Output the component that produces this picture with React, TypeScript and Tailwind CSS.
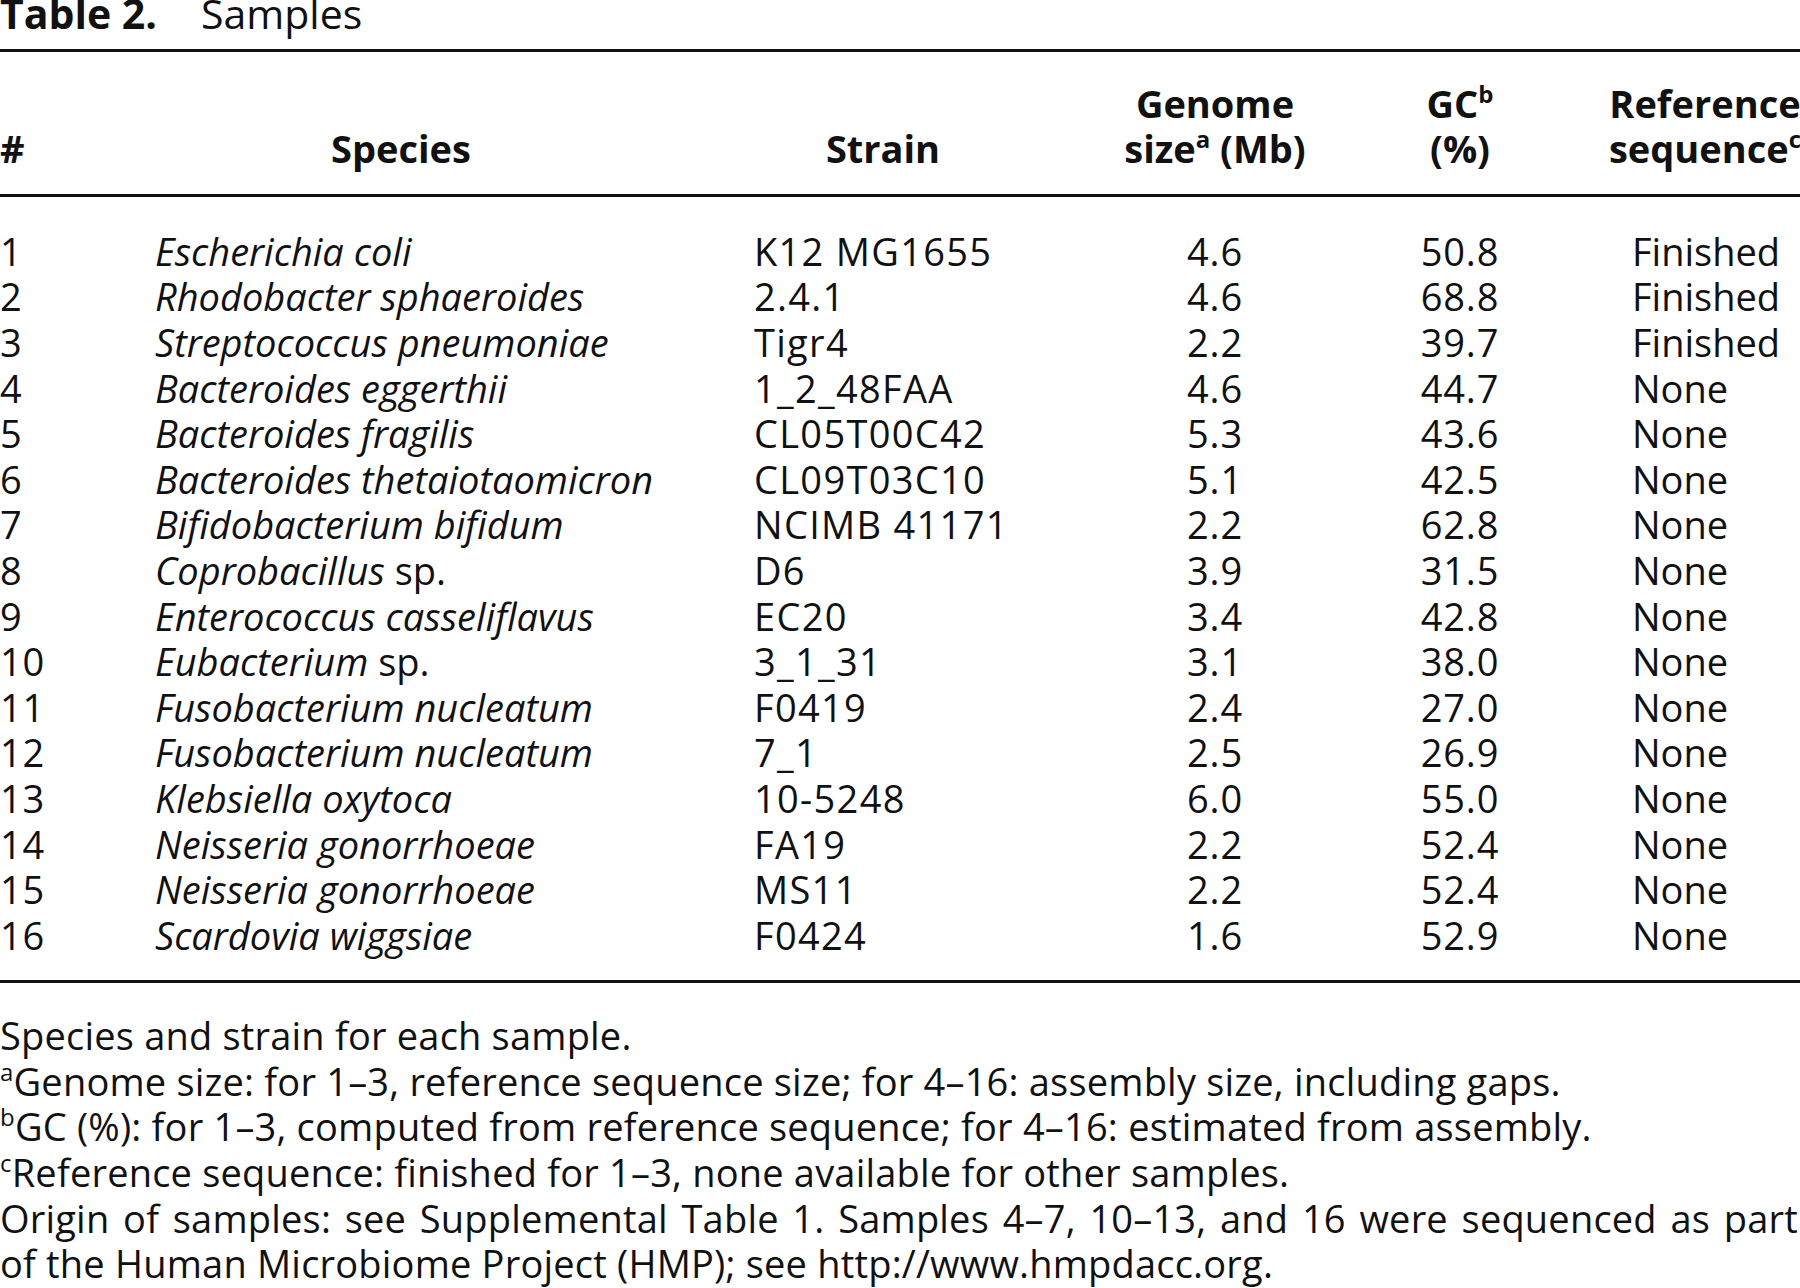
import React from "react";

type Row = {
  n: number;
  genus: string;
  sp: string;
  spItalic: boolean;
  strain: string;
  size: string;
  gc: string;
  ref: string;
};

const rows: Row[] = [
  { n: 1, genus: "Escherichia", sp: "coli", spItalic: true, strain: "K12 MG1655", size: "4.6", gc: "50.8", ref: "Finished" },
  { n: 2, genus: "Rhodobacter", sp: "sphaeroides", spItalic: true, strain: "2.4.1", size: "4.6", gc: "68.8", ref: "Finished" },
  { n: 3, genus: "Streptococcus", sp: "pneumoniae", spItalic: true, strain: "Tigr4", size: "2.2", gc: "39.7", ref: "Finished" },
  { n: 4, genus: "Bacteroides", sp: "eggerthii", spItalic: true, strain: "1_2_48FAA", size: "4.6", gc: "44.7", ref: "None" },
  { n: 5, genus: "Bacteroides", sp: "fragilis", spItalic: true, strain: "CL05T00C42", size: "5.3", gc: "43.6", ref: "None" },
  { n: 6, genus: "Bacteroides", sp: "thetaiotaomicron", spItalic: true, strain: "CL09T03C10", size: "5.1", gc: "42.5", ref: "None" },
  { n: 7, genus: "Bifidobacterium", sp: "bifidum", spItalic: true, strain: "NCIMB 41171", size: "2.2", gc: "62.8", ref: "None" },
  { n: 8, genus: "Coprobacillus", sp: "sp.", spItalic: false, strain: "D6", size: "3.9", gc: "31.5", ref: "None" },
  { n: 9, genus: "Enterococcus", sp: "casseliflavus", spItalic: true, strain: "EC20", size: "3.4", gc: "42.8", ref: "None" },
  { n: 10, genus: "Eubacterium", sp: "sp.", spItalic: false, strain: "3_1_31", size: "3.1", gc: "38.0", ref: "None" },
  { n: 11, genus: "Fusobacterium", sp: "nucleatum", spItalic: true, strain: "F0419", size: "2.4", gc: "27.0", ref: "None" },
  { n: 12, genus: "Fusobacterium", sp: "nucleatum", spItalic: true, strain: "7_1", size: "2.5", gc: "26.9", ref: "None" },
  { n: 13, genus: "Klebsiella", sp: "oxytoca", spItalic: true, strain: "10-5248", size: "6.0", gc: "55.0", ref: "None" },
  { n: 14, genus: "Neisseria", sp: "gonorrhoeae", spItalic: true, strain: "FA19", size: "2.2", gc: "52.4", ref: "None" },
  { n: 15, genus: "Neisseria", sp: "gonorrhoeae", spItalic: true, strain: "MS11", size: "2.2", gc: "52.4", ref: "None" },
  { n: 16, genus: "Scardovia", sp: "wiggsiae", spItalic: true, strain: "F0424", size: "1.6", gc: "52.9", ref: "None" },
];

function Sup({ children }: { children: React.ReactNode }) {
  return (
    <span className="relative top-[-15px] align-baseline text-[24px] leading-none">{children}</span>
  );
}

const grid = "grid grid-cols-[155px_599px_341px_240px_250px_240px]";

export default function App() {
  return (
    <div
      className="w-[1800px] h-[1288px] overflow-hidden bg-white text-[#111] text-[38px] leading-[45.6px]"
      style={{ fontFamily: '"Open Sans", "Noto Sans", sans-serif' }}
    >
      <div className="w-[1825px]">
        {/* Title */}
        <div className="-mt-[9px] flex whitespace-nowrap text-[41px]">
          <span className="font-bold">Table 2.</span>
          <span className="ml-[44px]">Samples</span>
        </div>

        {/* Top rule */}
        <div className="mt-[12px] h-[3px] bg-[#111]" />

        {/* Header */}
        <div className={`${grid} pt-[29px] font-bold`}>
          <div className="flex flex-col justify-end">
            <span>#</span>
          </div>
          <div className="flex flex-col justify-end">
            <div className="w-[492px] text-center">Species</div>
          </div>
          <div className="flex flex-col justify-end">
            <div className="w-[258px] text-center">Strain</div>
          </div>
          <div className="flex flex-col items-center text-center whitespace-nowrap">
            <span>Genome</span>
            <span>
              size<Sup>a</Sup> (Mb)
            </span>
          </div>
          <div className="flex flex-col items-center text-center whitespace-nowrap">
            <span>
              GC<Sup>b</Sup>
            </span>
            <span>(%)</span>
          </div>
          <div className="flex flex-col items-center text-center whitespace-nowrap">
            <span>Reference</span>
            <span>
              sequence<Sup>c</Sup>
            </span>
          </div>
        </div>

        {/* Header rule */}
        <div className="mt-[22px] h-[3px] bg-[#111]" />

        {/* Body */}
        <div className="mt-[32px] flex flex-col">
          {rows.map((r) => (
            <div key={r.n} className={`${grid} h-[45.6px] whitespace-nowrap`}>
              <div className="tracking-[0.8px]">{r.n}</div>
              <div>
                <span className="italic">{r.genus}</span>{" "}
                <span className={r.spItalic ? "italic" : ""}>{r.sp}</span>
              </div>
              <div className="tracking-[1.3px]">{r.strain}</div>
              <div className="text-center tracking-[0.8px]">{r.size}</div>
              <div className="text-center tracking-[0.8px]">{r.gc}</div>
              <div className="pl-[47px]">{r.ref}</div>
            </div>
          ))}
        </div>

        {/* Bottom rule */}
        <div className="mt-[22px] h-[3px] bg-[#111]" />

        {/* Footnotes */}
        <div className="mt-[30px] w-[1798px] tracking-[0.2px]">
          <div>Species and strain for each sample.</div>
          <div>
            <Sup>a</Sup>Genome size: for 1–3, reference sequence size; for 4–16: assembly size, including gaps.
          </div>
          <div>
            <Sup>b</Sup>GC (%): for 1–3, computed from reference sequence; for 4–16: estimated from assembly.
          </div>
          <div>
            <Sup>c</Sup>Reference sequence: finished for 1–3, none available for other samples.
          </div>
          <div className="whitespace-nowrap text-justify [text-align-last:justify]">
            Origin of samples: see Supplemental Table 1. Samples 4–7, 10–13, and 16 were sequenced as part
          </div>
          <div>of the Human Microbiome Project (HMP); see http://www.hmpdacc.org.</div>
        </div>
      </div>
    </div>
  );
}
